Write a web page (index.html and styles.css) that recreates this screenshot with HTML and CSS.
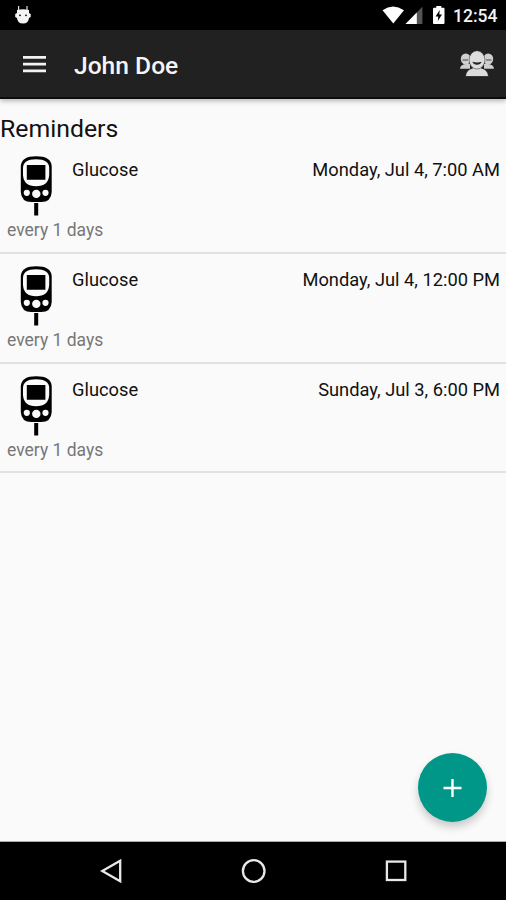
FILE: index.html
```html
<!DOCTYPE html>
<html lang="en">
<head>
<meta charset="utf-8">
<title>Reminders</title>
<link rel="stylesheet" href="styles.css">
</head>
<body>
<svg width="0" height="0" class="defs" aria-hidden="true">
  <symbol id="meter" viewBox="0 0 32 60">
    <path d="M.8 10Q1.5 .3 16.2 .3Q31 .3 31.7 10V36Q31.2 46 21 46H11.5Q1.3 46 .8 36Z"/>
    <path fill="#fafafa" d="M3 12Q3 3.2 16 3.2Q29.2 3.2 29.2 12V19Q28.4 30.3 16 30.3Q3.8 30.3 3 19Z"/>
    <path d="M6.8 9H25.4V23.7H6.8ZM14.2 47H18.2V59.5H14.2Z"/>
    <g fill="#fafafa"><circle cx="6.8" cy="36.8" r="3.1"/><circle cx="16.3" cy="37.9" r="4.2"/><circle cx="25.5" cy="36.8" r="3.1"/></g>
  </symbol>
</svg>
<div class="screen">
  <header class="status">
    <svg class="bot" viewBox="0 0 18 20" width="18" height="20">
      <path d="M4.6 1V6M13 1V6" stroke="#ddd" stroke-width="1.2"/>
      <path fill="#f4f4f4" d="M3 5Q9 3.7 15 5V8L16.7 9V12L15 13Q14.5 18.5 9 18.5Q3.5 18.5 3 13L1.2 12V9L3 8Z"/>
      <circle cx="6" cy="10.3" r=".9"/><circle cx="12" cy="10.3" r=".9"/>
    </svg>
    <div class="indicators">
      <svg viewBox="0 0 64 20" width="64" height="20">
        <path fill="#fff" d="M.5 5.2Q11 -2 22 5.2L11.3 18.6Z"/>
        <path fill="#555" d="M40.4 1.8V19H23.5Z"/>
        <path fill="#fff" d="M34.8 7.5V19H23.5Z"/>
        <path fill="#fff" d="M54.3 1H59.3V2.8H61.5Q62.5 2.8 62.5 3.8V18Q62.5 19 61.5 19H52Q51 19 51 18V3.8Q51 2.8 52 2.8H54.3Z"/>
        <path d="M57.7 5L53.6 11.5H56.3L55.8 16L60 9.6H57.3Z"/>
      </svg>
      <span class="clock">12:54</span>
    </div>
  </header>
  <nav class="toolbar">
    <svg class="menu" viewBox="0 0 24 18" width="24" height="18"><path d="M0 2.3H23M0 9.1H23M0 15.9H23" stroke="#f2f2f2" stroke-width="2.8"/></svg>
    <h1>John Doe</h1>
    <svg class="people" viewBox="0 0 36 28" width="36" height="28">
      <g fill="#cfcfcf">
        <ellipse cx="6.8" cy="9" rx="5" ry="5.6"/><ellipse cx="29.2" cy="9" rx="5" ry="5.6"/>
        <path d="M1 18.7Q1.4 14.5 7 14H11V18.7ZM25 18.7V14H29Q34.6 14.5 35 18.7Z"/>
      </g>
      <path d="M3.5 10H9M27 10H32.5" stroke="#444" stroke-width="1.2"/>
      <g fill="#dcdcdc" stroke="#222" stroke-width=".8">
        <path d="M6.4 26.5Q7 19.5 13.5 18.2V15H22.5V18.2Q29 19.5 29.6 26.5Z"/>
        <ellipse cx="18" cy="9.9" rx="7.9" ry="9.2" stroke-width=".5"/>
      </g>
      <path fill="#222" d="M13.3 11.8Q18 13 22.7 11.8Q21.5 14.7 18 14.7Q14.5 14.7 13.3 11.8Z"/>
    </svg>
  </nav>
  <main>
    <h2>Reminders</h2>
    <ul>
      <li><div class="top"><svg class="meter"><use href="#meter"/></svg><span>Glucose</span><time>Monday, Jul 4, 7:00 AM</time></div><p>every 1 days</p></li>
      <li><div class="top"><svg class="meter"><use href="#meter"/></svg><span>Glucose</span><time>Monday, Jul 4, 12:00 PM</time></div><p>every 1 days</p></li>
      <li><div class="top"><svg class="meter"><use href="#meter"/></svg><span>Glucose</span><time>Sunday, Jul 3, 6:00 PM</time></div><p>every 1 days</p></li>
    </ul>
    <button class="fab" aria-label="Add"><svg viewBox="0 0 20 20" width="20" height="20"><path d="M9.5 1V19M.5 10H18.5" stroke="#fff" stroke-width="2.4"/></svg></button>
  </main>
  <footer>
    <svg viewBox="0 0 26 26" width="26" height="26"><path d="M22.2 2.8V23.2L4.3 13Z"/></svg>
    <svg viewBox="0 0 26 26" width="26" height="26"><circle cx="12.7" cy="13" r="10.8"/></svg>
    <svg viewBox="0 0 26 26" width="26" height="26"><rect x="3.9" y="3.6" width="18.4" height="18.4"/></svg>
  </footer>
</div>
</body>
</html>
```
FILE: styles.css
```css
* { box-sizing: border-box; margin: 0; padding: 0; }
body { font-family: Roboto, "Liberation Sans", sans-serif; background: #fafafa; color: #111; }
.defs { position: absolute; }
.screen { display: flex; flex-direction: column; height: 900px; }
.status { display: flex; align-items: center; justify-content: space-between; flex: none; height: 30px; padding: 0 9px 0 14px; background: #000; }
.bot { margin-bottom: 1px; }
.indicators { display: flex; align-items: center; gap: 7px; }
.clock { width: 44px; color: #f2f2f2; font-size: 17.5px; font-weight: 500; line-height: 20px; white-space: nowrap; padding-top: 2px; }
.toolbar { display: flex; align-items: center; flex: none; height: 69px; padding: 0 11px 0 23px; background: #212121; border-bottom: 2px solid #0c0c0c; box-shadow: 0 2px 5px rgba(0, 0, 0, .28); z-index: 1; }
.menu { margin-top: 1px; }
h1 { flex: 1; margin: 4px 0 0 27px; color: #f5f5f5; font-size: 24.6px; font-weight: 500; line-height: 30px; }
.people { margin-top: 1px; }
main { position: relative; flex: 1; padding-top: 14px; border-bottom: 1px solid #aaa; }
h2 { height: 30px; padding-left: 0; font-size: 24.8px; font-weight: 400; line-height: 32px; }
ul { list-style: none; padding-top: 1.3px; }
li { height: 109.7px; padding: 12px 6px 0 7px; border-bottom: 2px solid #e1e1e1; }
.top { display: flex; height: 62px; font-size: 18.3px; line-height: 28px; }
.meter { width: 32px; height: 60px; margin: 0 20px 0 13px; }
time { margin-left: auto; }
p { color: #777; font-size: 17.5px; line-height: 24px; }
.fab { position: absolute; right: 19px; bottom: 19px; display: grid; place-items: center; width: 69px; height: 69px; border: 0; border-radius: 50%; background: #009688; box-shadow: 0 5px 8px rgba(0, 0, 0, .2); }
footer { display: flex; align-items: center; justify-content: space-between; flex: none; height: 58px; padding: 0 97px 0 98px; background: #000; }
footer svg { fill: none; stroke: #e8e8e8; stroke-width: 2.3; }
```
